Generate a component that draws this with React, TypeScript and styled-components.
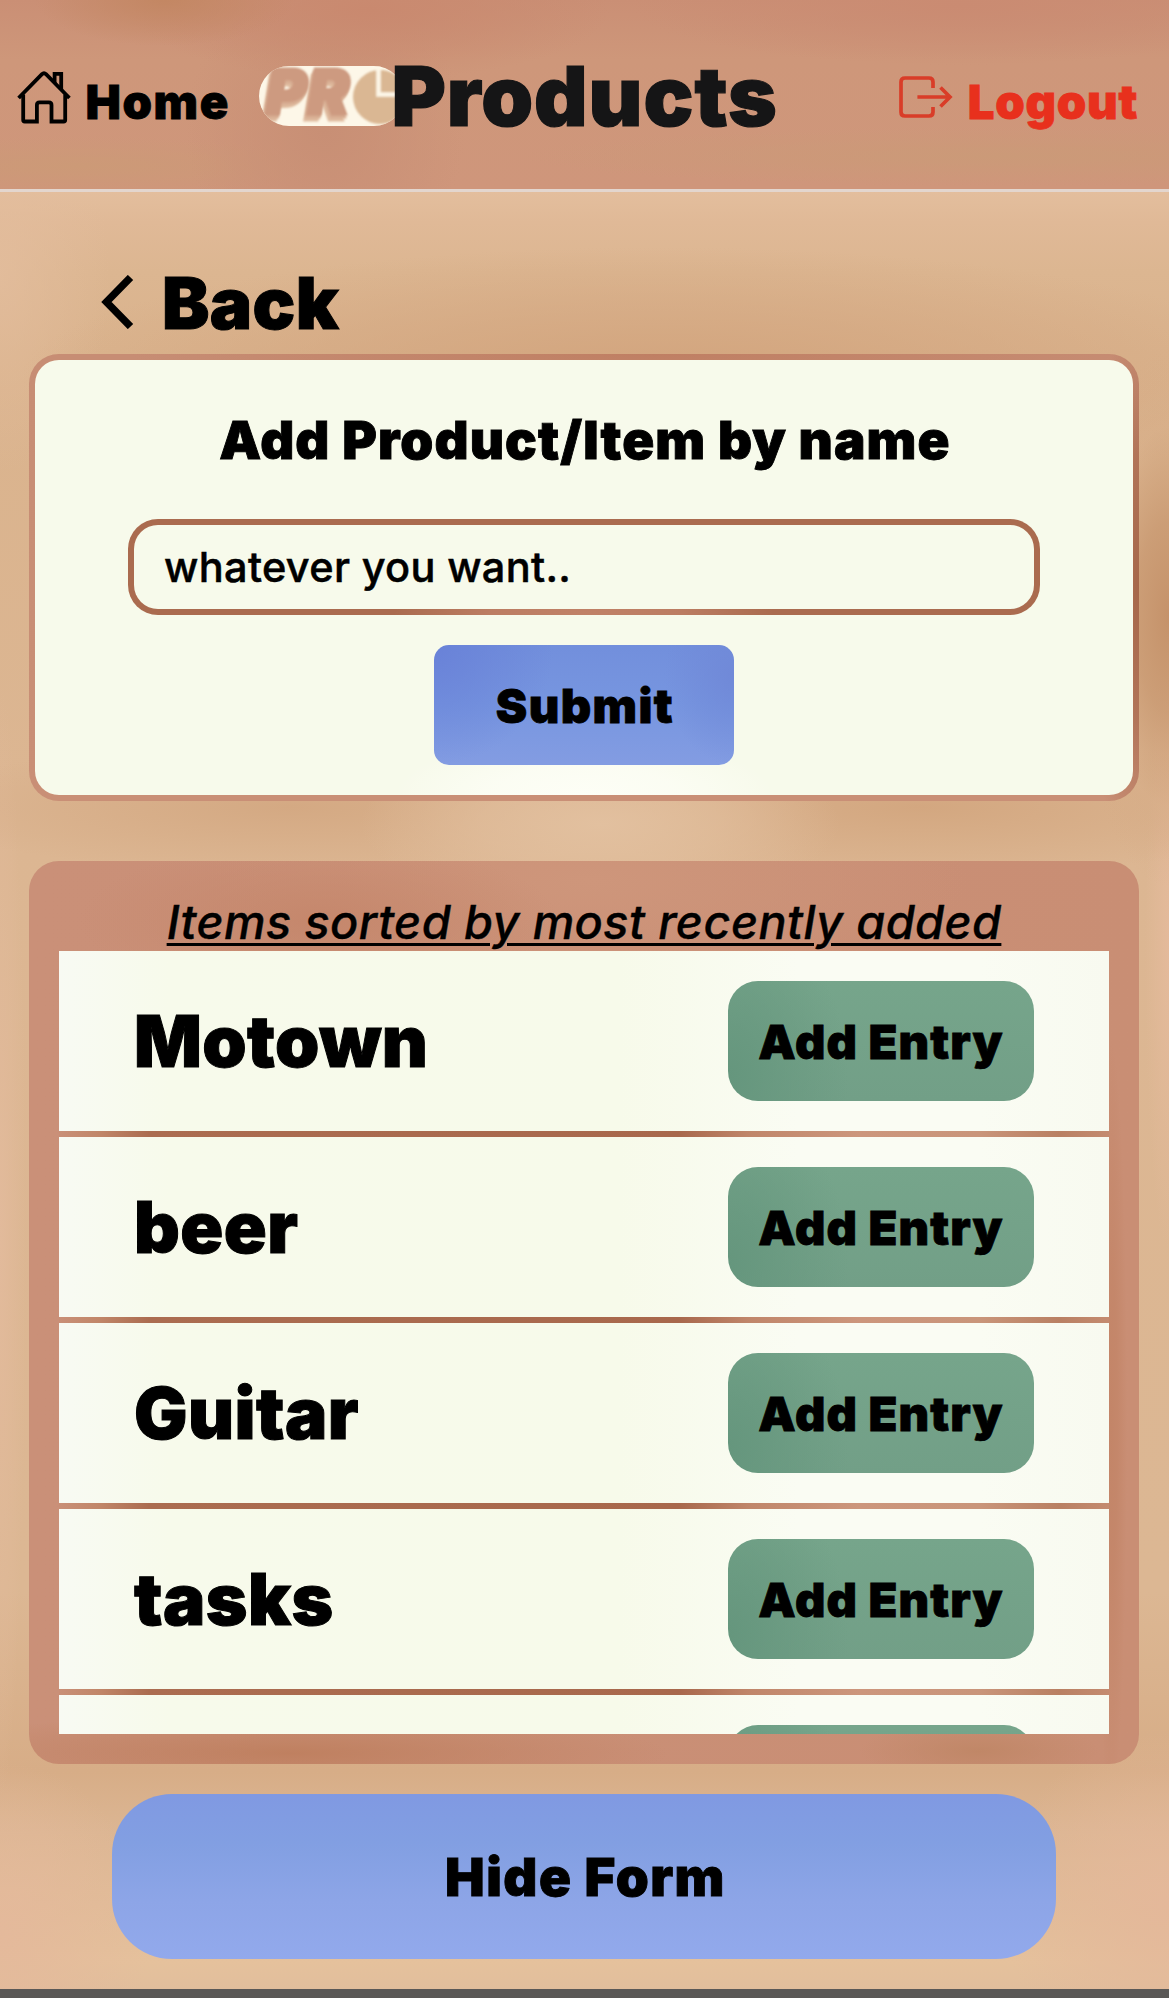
import React from "react";
import styled, { createGlobalStyle } from "styled-components";

const GlobalStyle = createGlobalStyle`
  *, *::before, *::after { box-sizing: border-box; }
  body {
    margin: 0;
    color: #000;
    font-family: Inter, "Liberation Sans", sans-serif;
    font-weight: 900;
  }
  button, input { font-family: inherit; }
`;

const Page = styled.div`
  display: flex;
  flex-direction: column;
  min-height: 1998px;
`;

const Header = styled.header`
  display: flex;
  align-items: center;
  height: 192px;
  padding: 0 31px 0 17px;
  border-bottom: 3px solid #e3d6ce;
  background:
    radial-gradient(ellipse 130px 46px at 165px 0, #c38763 0%, transparent 100%),
    radial-gradient(ellipse 240px 70px at 370px 10px, #c9896f 0%, transparent 100%),
    radial-gradient(ellipse 330px 60px at 960px 5px, #ca8b72 0%, transparent 100%),
    radial-gradient(ellipse 140px 150px at 325px 130px, #c88f75 0%, transparent 100%),
    radial-gradient(ellipse 260px 30px at 80px 166px, #cc9a77 0%, transparent 100%),
    radial-gradient(ellipse 480px 30px at 1000px 156px, #cb9a78 0%, transparent 100%),
    linear-gradient(#ca8f75 0, #ce977a 60px, #cf967b 189px);
`;

const NavLink = styled.a<{ $tone?: string; $gap: number; $track: number }>`
  display: flex;
  align-items: center;
  gap: ${(p) => p.$gap}px;
  color: ${(p) => p.$tone ?? "#000"};
  font-size: 47.2px;
  letter-spacing: ${(p) => p.$track}px;
  line-height: 56px;
  -webkit-text-stroke: 0.8px currentColor;

  svg { flex: none; margin-top: 4px; }
  span { margin-top: 14px; }
`;

const Brand = styled.div`
  display: flex;
  align-items: center;
  margin-left: 29px;
  margin-right: auto;
`;

const LogoPill = styled.div`
  flex: none;
  width: 145px;
  height: 60px;
  margin-top: 3px;
  margin-right: -12.5px;
  border-radius: 30px;
  overflow: hidden;
  background: #fdf7e8;
  svg { display: block; }
`;

const PageTitle = styled.h1`
  position: relative;
  margin: 2px 0 0;
  color: #151516;
  font-size: 83px;
  font-weight: 900;
  line-height: 100px;
  letter-spacing: 0.95px;
  -webkit-text-stroke: 1.2px currentColor;
`;

const Main = styled.main`
  display: flex;
  flex-direction: column;
  height: 1797px;
  padding: 60px 30px 30px 29px;
  background:
    radial-gradient(ellipse 95px 270px at 1169px 425px, #c5926a 0%, rgba(199,150,110,.75) 35%, rgba(213,170,132,.3) 70%, transparent 100%),
    radial-gradient(ellipse 640px 130px at 660px 185px, #d2a47d 0%, rgba(211,166,128,.6) 50%, transparent 100%),
    radial-gradient(ellipse 240px 85px at 600px 632px, #e2c09f 0%, rgba(226,192,159,.6) 50%, transparent 100%),
    radial-gradient(ellipse 380px 65px at 290px 615px, #d4a983 0%, transparent 100%),
    radial-gradient(ellipse 380px 70px at 920px 615px, #d3a780 0%, transparent 100%),
    radial-gradient(ellipse 110px 200px at 0 80px, rgba(227,189,157,.8) 0%, transparent 100%),
    radial-gradient(ellipse 24px 300px at 1169px 760px, #e4ba9b 0%, transparent 100%),
    radial-gradient(ellipse 26px 560px at 0 1050px, #e2ba9b 0%, transparent 100%),
    radial-gradient(ellipse 150px 170px at 0 1740px, #e4b99b 0%, transparent 100%),
    radial-gradient(ellipse 170px 170px at 1169px 1710px, #e4b89a 0%, transparent 100%),
    linear-gradient(#e3be9d 0, #e0b997 30px, #dcb691 80px, #dab38d 160px, #dcb692 600px, #dcb793 1400px, #d7ad87 1580px, #dcb693 1640px, #e5c19c 1770px, #e1be9c 1797px);
`;

const BackLink = styled.a`
  display: flex;
  align-items: center;
  align-self: flex-start;
  gap: 28px;
  height: 102px;
  padding-left: 72px;
  font-size: 71px;
  letter-spacing: 0.4px;
  line-height: 84px;
  -webkit-text-stroke: 1px currentColor;

  svg { margin-top: -2px; }
`;

const FormCard = styled.form`
  display: flex;
  flex-direction: column;
  align-items: center;
  height: 447px;
  padding: 30px 0;
  border: 6px solid transparent;
  border-radius: 30px;
  background:
    radial-gradient(ellipse 190px 60px at 50% 100%, #fdfef6 0%, rgba(253,254,246,.7) 50%, transparent 100%) padding-box,
    linear-gradient(#f7faeb, #f7faeb) padding-box,
    radial-gradient(ellipse 60px 260px at 100% 52%, #a6674a 0%, rgba(168,105,76,.7) 50%, transparent 100%) border-box,
    radial-gradient(ellipse 520px 40px at 56% 0, #bf7f63 0%, transparent 100%) border-box,
    linear-gradient(#c78d74, #c98f76) border-box;
`;

const FormTitle = styled.h2`
  margin: 0 0 29px;
  padding-left: 2px;
  font-size: 52.8px;
  font-weight: 900;
  line-height: 100px;
  letter-spacing: 1.13px;
  -webkit-text-stroke: 0.9px currentColor;
  white-space: nowrap;
`;

const NameInput = styled.input`
  width: 912px;
  height: 96px;
  padding: 0 30px;
  border: 6px solid transparent;
  border-radius: 30px;
  outline: none;
  background:
    linear-gradient(#f7faeb, #f7faeb) padding-box,
    radial-gradient(ellipse 190px 50px at 50% 100%, #c08167 0%, rgba(192,129,103,.8) 50%, transparent 100%) border-box,
    linear-gradient(#aa6b4f, #aa6b4f) border-box;
  color: #000;
  font-size: 41.5px;
  font-weight: 500;
  letter-spacing: 0.32px;
  -webkit-text-stroke: 0.5px #000;
  &::placeholder { color: #000; opacity: 1; }
`;

const SubmitButton = styled.button`
  width: 300px;
  height: 120px;
  margin-top: 30px;
  padding: 0 0 0 2px;
  border: 0;
  border-radius: 15px;
  background:
    radial-gradient(ellipse 120px 120px at 0 0, #6982d8 0%, transparent 100%),
    radial-gradient(ellipse 70px 90px at 100% 25%, #7089d8 0%, transparent 100%),
    linear-gradient(#728fdc, #7796e0 50%, #839ce2);
  color: #000;
  font-size: 47.2px;
  font-weight: 900;
  letter-spacing: 1.4px;
  -webkit-text-stroke: 0.8px currentColor;
`;

const ItemsCard = styled.section`
  display: flex;
  flex-direction: column;
  height: 903px;
  margin-top: 60px;
  padding: 30px;
  border-radius: 30px;
  background:
    radial-gradient(ellipse 240px 80px at 290px 60px, #c5876c 0%, transparent 100%),
    radial-gradient(ellipse 380px 110px at 560px 20px, #ce967b 0%, transparent 100%),
    radial-gradient(ellipse 380px 40px at 260px 892px, #bf8060 0%, transparent 100%),
    radial-gradient(ellipse 120px 30px at 950px 890px, #c08767 0%, transparent 100%),
    radial-gradient(ellipse 16px 380px at 1082px 560px, #c38568 0%, rgba(195,133,104,.8) 40%, transparent 100%),
    linear-gradient(90deg, #ca9078, #c98e74);
`;

const ItemsCaption = styled.p`
  margin: 0;
  padding-top: 1px;
  height: 60px;
  font-size: 46.8px;
  font-weight: 500;
  font-style: italic;
  line-height: 60px;
  letter-spacing: 0.42px;
  text-align: center;
  text-decoration: underline;
  text-decoration-thickness: 3px;
  text-underline-offset: 4px;
  -webkit-text-stroke: 0.4px #000;
  white-space: nowrap;
`;

const ItemList = styled.ul`
  display: flex;
  flex-direction: column;
  gap: 6px;
  height: 783px;
  margin: 0;
  padding: 0;
  overflow: hidden;
  list-style: none;
  background: linear-gradient(90deg, #c98f77 0, #c18669 40px, #ab6c50 90px, #a8684c 620px, #c0866a 690px, #cc967c 800px, #c9957a 920px, #b98063 1000px, #c48b70 1050px);
`;

const ItemRow = styled.li`
  display: flex;
  flex: none;
  align-items: center;
  justify-content: space-between;
  height: 180px;
  padding: 0 75px;
  background: linear-gradient(90deg, #f8faf3 0, #f7faeb 110px, #f7faea 560px, #fafcf3 740px, #fafcf3 920px, #f8faf0 1050px);
`;

const ItemName = styled.span`
  font-size: 71px;
  letter-spacing: 0.4px;
  line-height: 84px;
  -webkit-text-stroke: 1px currentColor;
`;

const AddEntryButton = styled.button`
  width: 306px;
  height: 120px;
  padding: 0;
  border: 0;
  border-radius: 30px;
  background:
    radial-gradient(ellipse 120px 170px at 0 80%, #65967d 0%, transparent 100%),
    linear-gradient(#76a58b, #74a289 50%, #729f87);
  color: #000;
  font-size: 47.2px;
  font-weight: 900;
  letter-spacing: 1.1px;
  -webkit-text-stroke: 0.8px currentColor;
  white-space: nowrap;
`;

const HideFormButton = styled.button`
  align-self: center;
  width: 944px;
  height: 165px;
  margin-top: 30px;
  padding: 0 0 0 3px;
  border: 0;
  border-radius: 60px;
  background: linear-gradient(#8099e2 0, #829fe2 30%, #8da5e7 65%, #92a9ec 100%);
  color: #000;
  font-size: 52.8px;
  font-weight: 900;
  letter-spacing: 1.5px;
  -webkit-text-stroke: 0.9px currentColor;
`;

const BottomBar = styled.div`
  height: 9px;
  background: #5a5856;
`;

const HomeIcon = () => (
  <svg width="54" height="54" viewBox="0 0 54 54" fill="none" stroke="#000" strokeWidth="3.8">
    <path d="M1.6 28 25 4.2q2-2 4 0L52.4 28" strokeLinejoin="round" />
    <path d="M37.6 13V3.8h6.6V20" />
    <path d="M6.2 24.5V50q0 1.5 1.5 1.5h12.2V35q0-2.6 2.6-2.6h9.4q2.6 0 2.6 2.6v16.5h12.2q1.5 0 1.5-1.5V24.5" />
  </svg>
);

const LogoutIcon = () => (
  <svg width="54" height="42" viewBox="0 0 54 42" fill="none" stroke="#d93d28" strokeWidth="3.7">
    <path d="M34 12V6q0-4-4-4H6Q2 2 2 6v30q0 4 4 4h24q4 0 4-4v-5" />
    <path d="M18.4 21H51M41.5 11.5 51 21l-9.5 9.5" />
  </svg>
);

const ChevronIcon = () => (
  <svg width="33" height="54" viewBox="0 0 33 54" fill="none" stroke="#000" strokeWidth="7.5">
    <path d="M29.5 2.5 5.5 27l24 24.5" />
  </svg>
);

const Logo = () => (
  <svg width="145" height="60" viewBox="0 0 145 60">
    <defs>
      <filter id="emboss" x="-15%" y="-15%" width="130%" height="130%">
        <feGaussianBlur in="SourceGraphic" stdDeviation="1" result="face" />
        <feOffset in="face" dx="-3" dy="6" result="low" />
        <feOffset in="face" dx="-1.5" dy="3" result="mid" />
        <feFlood floodColor="#dfbb9f" />
        <feComposite in2="low" operator="in" result="lowTint" />
        <feFlood floodColor="#d8ae93" />
        <feComposite in2="mid" operator="in" result="midTint" />
        <feMerge>
          <feMergeNode in="lowTint" />
          <feMergeNode in="midTint" />
          <feMergeNode in="face" />
        </feMerge>
      </filter>
      <filter id="soft">
        <feGaussianBlur stdDeviation="0.8" />
      </filter>
    </defs>
    <text
      x="7"
      y="48"
      fill="#cd9a80"
      stroke="#cd9a80"
      strokeWidth="3"
      fontFamily="Inter, sans-serif"
      fontWeight="900"
      fontStyle="italic"
      fontSize="62"
      letterSpacing="1"
      filter="url(#emboss)"
    >
      PR
    </text>
    <g filter="url(#soft)">
      <circle cx="121" cy="31" r="27" fill="#dab793" />
      <path d="M119.5 0v28.5H150" fill="none" stroke="#fdf7e8" strokeWidth="4.5" />
    </g>
  </svg>
);

const items = ["Motown", "beer", "Guitar", "tasks", "books"];

export default function App() {
  return (
    <Page>
      <GlobalStyle />
      <Header>
        <NavLink $gap={14.5} $track={1.6}>
          <HomeIcon />
          <span>Home</span>
        </NavLink>
        <Brand>
          <LogoPill><Logo /></LogoPill>
          <PageTitle>Products</PageTitle>
        </Brand>
        <NavLink $tone="#e8301d" $gap={14.5} $track={0.75}>
          <LogoutIcon />
          <span>Logout</span>
        </NavLink>
      </Header>
      <Main>
        <BackLink>
          <ChevronIcon />
          <span>Back</span>
        </BackLink>
        <FormCard>
          <FormTitle>Add Product/Item by name</FormTitle>
          <NameInput placeholder="whatever you want.." />
          <SubmitButton type="button">Submit</SubmitButton>
        </FormCard>
        <ItemsCard>
          <ItemsCaption>Items sorted by most recently added</ItemsCaption>
          <ItemList>
            {items.map((name) => (
              <ItemRow key={name}>
                <ItemName>{name}</ItemName>
                <AddEntryButton>Add Entry</AddEntryButton>
              </ItemRow>
            ))}
          </ItemList>
        </ItemsCard>
        <HideFormButton>Hide Form</HideFormButton>
      </Main>
      <BottomBar />
    </Page>
  );
}
